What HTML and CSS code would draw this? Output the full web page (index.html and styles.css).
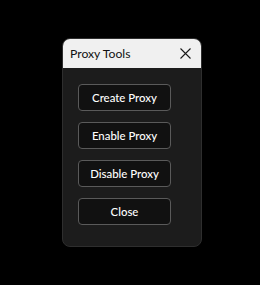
FILE: index.html
```html
<!DOCTYPE html>
<html>
<head>
<meta charset="utf-8">
<link rel="stylesheet" href="styles.css">
</head>
<body>
<div class="dialog">
  <div class="titlebar">
    <span class="title">Proxy Tools</span>
    <svg class="close-icon" width="11" height="11" viewBox="0 0 11 11"><path d="M0.5 0.5L10.5 10.5M10.5 0.5L0.5 10.5" stroke="#1a1a1a" stroke-width="1.1" fill="none"/></svg>
  </div>
  <div class="content">
    <button class="btn">Create Proxy</button>
    <button class="btn">Enable Proxy</button>
    <button class="btn">Disable Proxy</button>
    <button class="btn">Close</button>
  </div>
</div>
</body>
</html>
```
FILE: styles.css
```css
html, body {
  margin: 0;
  background: #000;
}
body {
  padding: 38px 0 0 62px;
  font-family: "Lato", "Noto Sans", sans-serif;
}
.dialog {
  width: 140px;
  height: 209px;
  box-sizing: border-box;
  background: #1c1c1c;
  border: 1px solid #2e2e2e;
  border-radius: 8px;
  overflow: hidden;
  display: flex;
  flex-direction: column;
}
.titlebar {
  height: 29px;
  background: #f0f0f0;
  display: flex;
  align-items: center;
  justify-content: space-between;
  padding: 0 10px 0 7px;
}
.title {
  font-size: 12.2px;
  color: #111;
}
.close-icon {
  display: block;
}
.content {
  display: flex;
  flex-direction: column;
  align-items: flex-start;
  gap: 11px;
  padding: 16px 0 0 15px;
}
.btn {
  width: 93px;
  height: 27px;
  box-sizing: border-box;
  background: #111;
  color: #fff;
  border: 1px solid #5a5a5a;
  border-radius: 4px;
  font-family: "Lato", "Noto Sans", sans-serif;
  font-size: 11.4px;
  font-weight: 500;
  padding: 0;
}
```
